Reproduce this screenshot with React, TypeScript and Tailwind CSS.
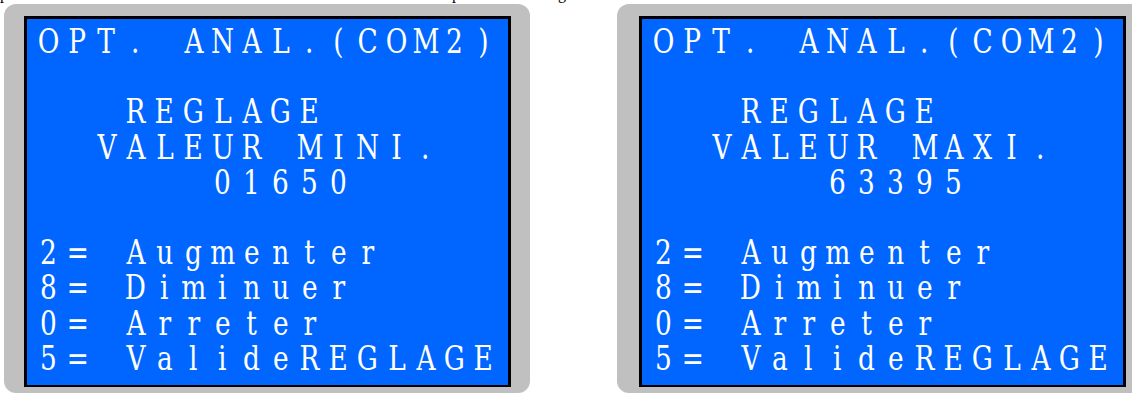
import React from "react";

const Line = ({ text }: { text: string }) => (
  <div className="flex h-[35.2px] leading-[35.2px] -ml-[2px] text-[33px] text-white font-['DejaVu_Serif',serif]">
    {Array.from(text).map((c, i) => (
      <span key={i} className="w-[29px] shrink-0 flex justify-center whitespace-pre">
        <span className="inline-block scale-x-[0.8]">{c}</span>
      </span>
    ))}
  </div>
);

const Panel = ({ lines, outer }: { lines: string[]; outer: string }) => (
  <div className={outer}>
    <div className="w-[487px] h-[371px] border-black border-x-[3px] border-t-[3px] border-b-[2px] bg-[#0066ff] pl-[9px] pt-[5px] overflow-hidden">
      {lines.map((l, i) => (
        <Line key={i} text={l} />
      ))}
    </div>
  </div>
);

export default function App() {
  const left = [
    "OPT. ANAL.(COM2)",
    "",
    "   REGLAGE",
    "  VALEUR MINI.",
    "      01650",
    "",
    "2= Augmenter",
    "8= Diminuer",
    "0= Arreter",
    "5= ValideREGLAGE",
  ];
  const right = [
    "OPT. ANAL.(COM2)",
    "",
    "   REGLAGE",
    "  VALEUR MAXI.",
    "      63395",
    "",
    "2= Augmenter",
    "8= Diminuer",
    "0= Arreter",
    "5= ValideREGLAGE",
  ];
  return (
    <div className="w-[1132px] h-[394px] overflow-hidden bg-white">
      <div className="h-[4px] overflow-hidden">
        <div className="-mt-[14px] flex text-[16px] leading-[16px] text-black font-['Liberation_Serif',serif] whitespace-pre">
          <span className="w-[452px]">p</span>
          <span className="w-[106px]">p</span>
          <span>g</span>
        </div>
      </div>
      <div className="flex items-start">
        <Panel
          lines={left}
          outer="ml-[4px] shrink-0 bg-[#c0c0c0] rounded-[12px] pl-[20px] pt-[12px] pr-[19px] pb-[6px]"
        />
        <Panel
          lines={right}
          outer="ml-[87px] shrink-0 bg-[#c0c0c0] rounded-[12px] pl-[22px] pt-[12px] pr-[19px] pb-[6px]"
        />
      </div>
    </div>
  );
}
